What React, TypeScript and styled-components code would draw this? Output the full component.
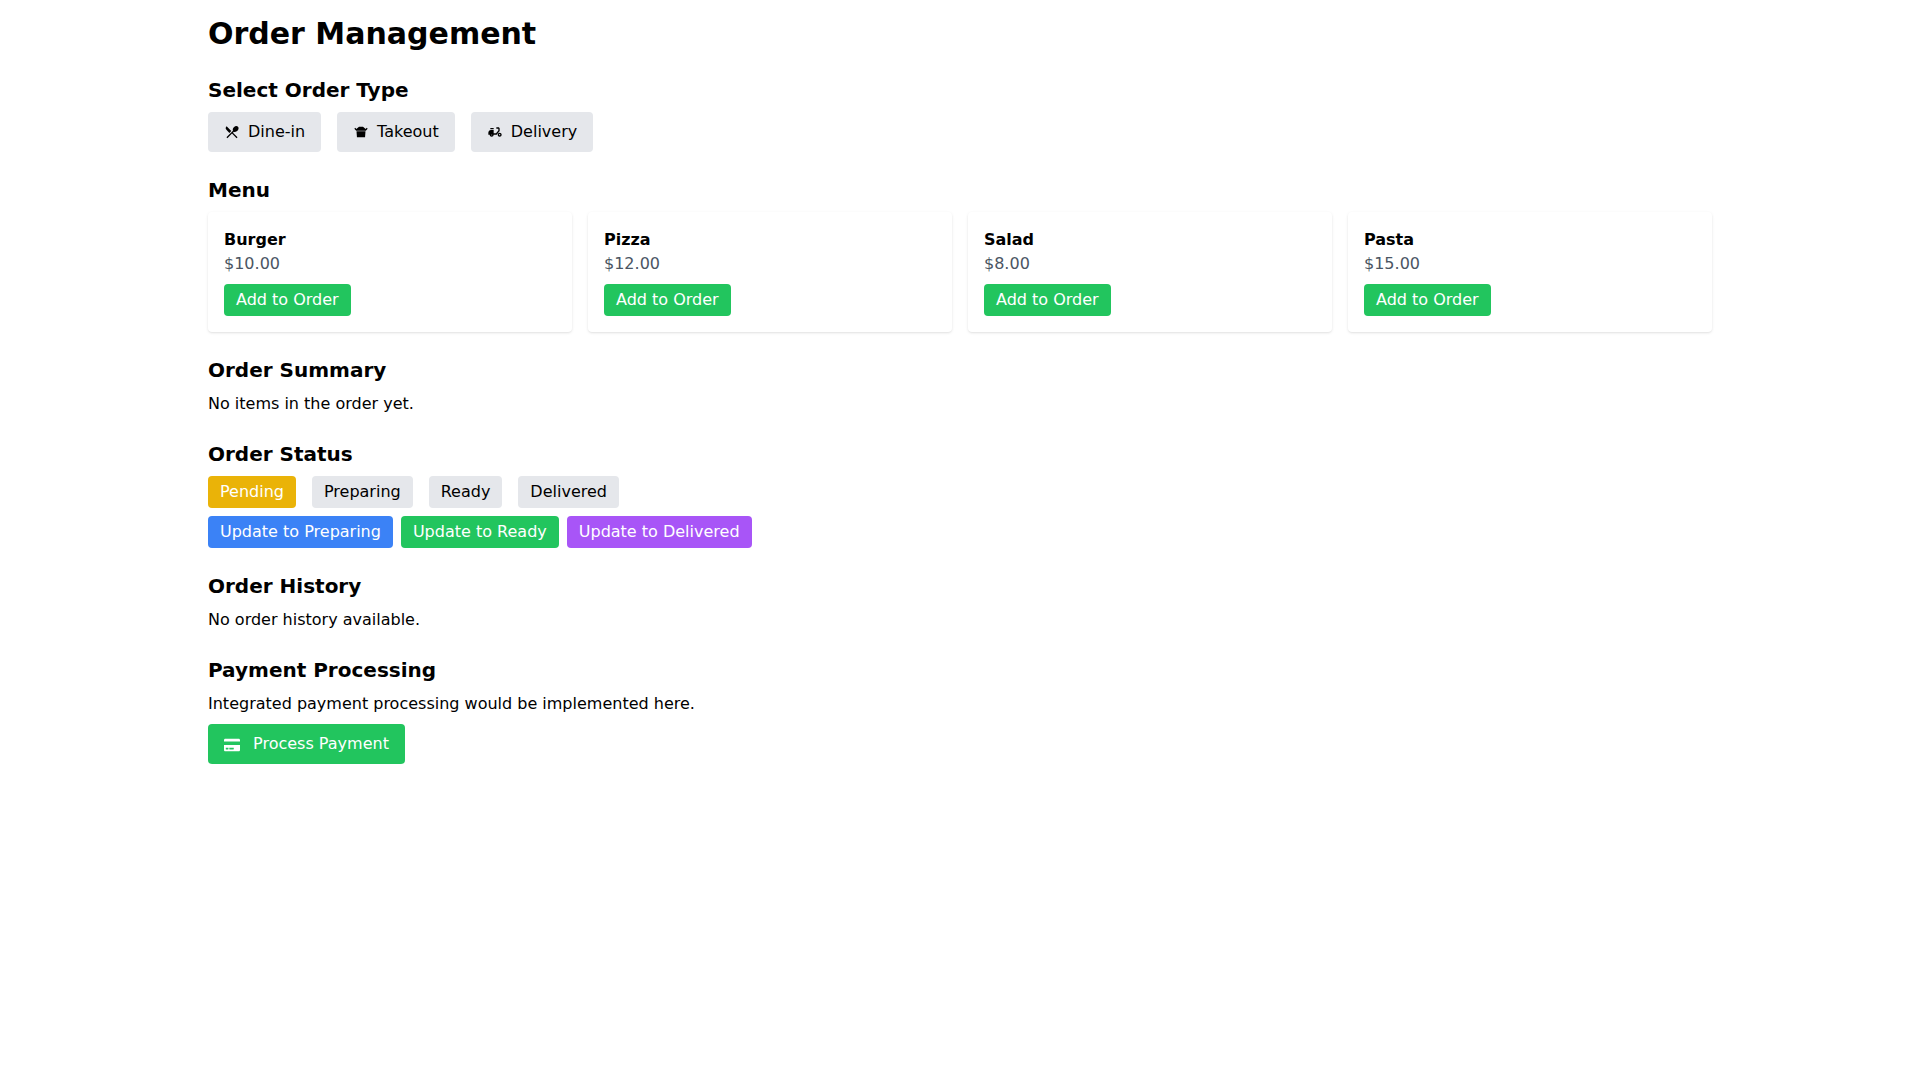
import React, { useState } from 'react';
import styled, { createGlobalStyle } from 'styled-components';
import { MdRestaurantMenu, MdTakeoutDining, MdDeliveryDining } from 'react-icons/md';
import { FaCreditCard } from 'react-icons/fa';

const colors = {
  gray: '#e5e7eb',
  yellow: '#eab308',
  blue: '#3b82f6',
  green: '#22c55e',
  purple: '#a855f7',
};

type Tone = keyof typeof colors;

const GlobalStyle = createGlobalStyle`
  *, *::before, *::after {
    box-sizing: border-box;
  }
  body {
    margin: 0;
    background: #fff;
    color: #000;
    font-family: 'DejaVu Sans', sans-serif;
    font-size: 16px;
    line-height: 24px;
  }
  h1, h2, h3, p {
    margin: 0;
  }
`;

const Page = styled.main`
  max-width: 1536px;
  margin: 0 auto;
  padding: 16px;
  display: flex;
  flex-direction: column;
  gap: 24px;
`;

const Title = styled.h1`
  font-size: 30px;
  line-height: 36px;
  font-weight: 700;
`;

const Section = styled.section`
  display: flex;
  flex-direction: column;
  align-items: stretch;
  gap: 8px;
`;

const SectionTitle = styled.h2`
  font-size: 20px;
  line-height: 28px;
  font-weight: 700;
`;

const Row = styled.div<{ $gap: number }>`
  display: flex;
  flex-wrap: wrap;
  gap: ${({ $gap }) => $gap}px;
`;

const Button = styled.button<{ $tone: Tone; $large?: boolean }>`
  padding: ${({ $large }) => ($large ? '8px 16px' : '4px 12px')};
  border: 0;
  border-radius: 4px;
  background: ${({ $tone }) => colors[$tone]};
  color: ${({ $tone }) => ($tone === 'gray' ? '#000' : '#fff')};
  font: inherit;
  cursor: pointer;
`;

const TypeButton = styled(Button)`
  display: flex;
  align-items: center;
  gap: 8px;
`;

const PaymentButton = styled(Button)`
  svg {
    margin-right: 8px;
    vertical-align: middle;
  }
`;

const StatusBadge = styled.span<{ $tone: Tone }>`
  padding: 4px 12px;
  border-radius: 4px;
  background: ${({ $tone }) => colors[$tone]};
  color: ${({ $tone }) => ($tone === 'gray' ? '#000' : '#fff')};
`;

const MenuGrid = styled.div`
  display: grid;
  grid-template-columns: repeat(auto-fit, minmax(280px, 1fr));
  gap: 16px;
`;

const MenuCard = styled.article`
  padding: 16px;
  border-radius: 4px;
  background: #fff;
  box-shadow:
    0 1px 3px 0 rgba(0, 0, 0, 0.1),
    0 1px 2px -1px rgba(0, 0, 0, 0.1);
`;

const ItemName = styled.h3`
  font-size: 16px;
  line-height: 24px;
  font-weight: 700;
`;

const Price = styled.p`
  margin-bottom: 8px;
  color: #4b5563;
`;

const orderTypes = [
  { name: 'Dine-in', Icon: MdRestaurantMenu },
  { name: 'Takeout', Icon: MdTakeoutDining },
  { name: 'Delivery', Icon: MdDeliveryDining },
];

const menu = [
  { name: 'Burger', price: 10 },
  { name: 'Pizza', price: 12 },
  { name: 'Salad', price: 8 },
  { name: 'Pasta', price: 15 },
];

const statuses: { name: string; active: Tone; update?: Tone }[] = [
  { name: 'Pending', active: 'yellow' },
  { name: 'Preparing', active: 'blue', update: 'blue' },
  { name: 'Ready', active: 'green', update: 'green' },
  { name: 'Delivered', active: 'purple', update: 'purple' },
];

export default function App() {
  const [orderType, setOrderType] = useState('');
  const [items, setItems] = useState<string[]>([]);
  const [status, setStatus] = useState('Pending');

  return (
    <>
      <GlobalStyle />
      <Page>
        <Title>Order Management</Title>

        <Section>
          <SectionTitle>Select Order Type</SectionTitle>
          <Row $gap={16}>
            {orderTypes.map(({ name, Icon }) => (
              <TypeButton
                key={name}
                type="button"
                $large
                $tone={orderType === name ? 'blue' : 'gray'}
                onClick={() => setOrderType(name)}
              >
                <Icon aria-hidden />
                {name}
              </TypeButton>
            ))}
          </Row>
        </Section>

        <Section>
          <SectionTitle>Menu</SectionTitle>
          <MenuGrid>
            {menu.map(({ name, price }) => (
              <MenuCard key={name}>
                <ItemName>{name}</ItemName>
                <Price>${price.toFixed(2)}</Price>
                <Button type="button" $tone="green" onClick={() => setItems([...items, name])}>
                  Add to Order
                </Button>
              </MenuCard>
            ))}
          </MenuGrid>
        </Section>

        <Section>
          <SectionTitle>Order Summary</SectionTitle>
          {items.length === 0 ? (
            <p>No items in the order yet.</p>
          ) : (
            items.map((item, index) => <p key={index}>{item}</p>)
          )}
        </Section>

        <Section>
          <SectionTitle>Order Status</SectionTitle>
          <Row $gap={16}>
            {statuses.map(({ name, active }) => (
              <StatusBadge key={name} $tone={status === name ? active : 'gray'}>
                {name}
              </StatusBadge>
            ))}
          </Row>
          <Row $gap={8}>
            {statuses.map(
              ({ name, update }) =>
                update && (
                  <Button key={name} type="button" $tone={update} onClick={() => setStatus(name)}>
                    Update to {name}
                  </Button>
                ),
            )}
          </Row>
        </Section>

        <Section>
          <SectionTitle>Order History</SectionTitle>
          <p>No order history available.</p>
        </Section>

        <Section>
          <SectionTitle>Payment Processing</SectionTitle>
          <p>Integrated payment processing would be implemented here.</p>
          <Row $gap={8}>
            <PaymentButton type="button" $large $tone="green">
              <FaCreditCard aria-hidden /> Process Payment
            </PaymentButton>
          </Row>
        </Section>
      </Page>
    </>
  );
}
